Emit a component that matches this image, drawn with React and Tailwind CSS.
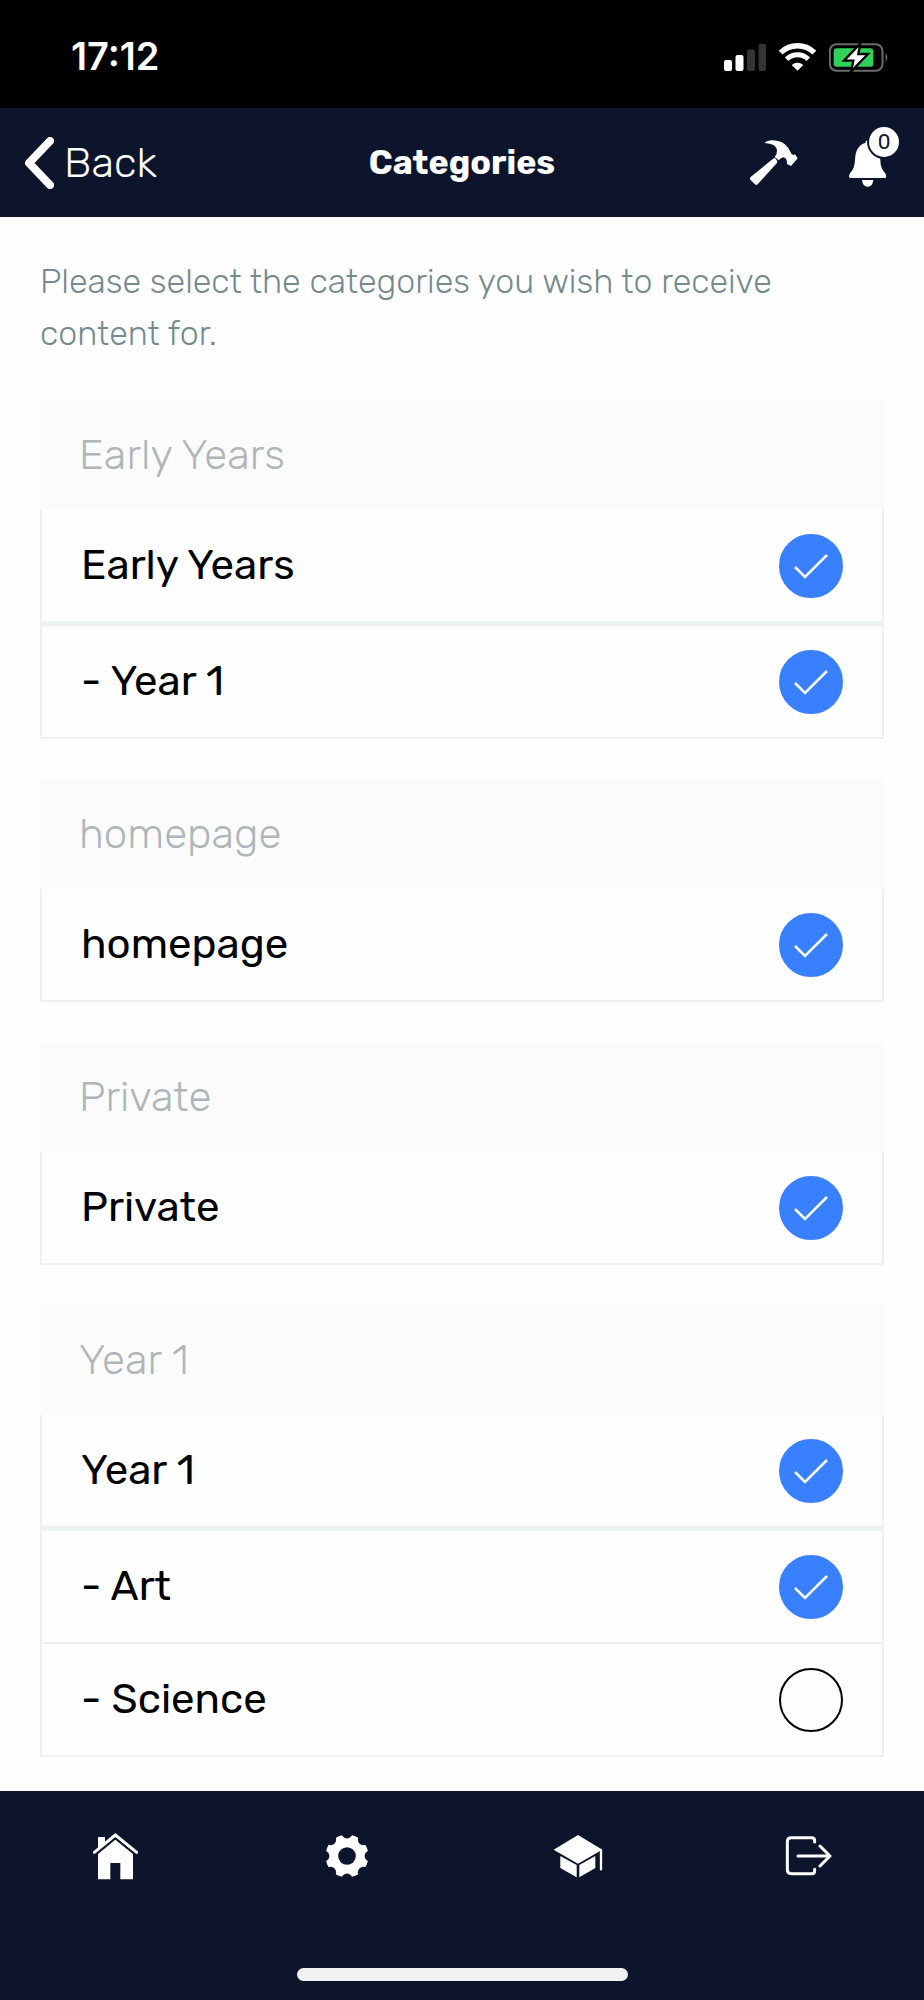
import React, { useState } from "react";

const initialGroups = [
  {
    title: "Early Years",
    items: [
      { label: "Early Years", checked: true },
      { label: "- Year 1", checked: true },
    ],
  },
  {
    title: "homepage",
    items: [{ label: "homepage", checked: true }],
  },
  {
    title: "Private",
    items: [{ label: "Private", checked: true }],
  },
  {
    title: "Year 1",
    items: [
      { label: "Year 1", checked: true },
      { label: "- Art", checked: true },
      { label: "- Science", checked: false },
    ],
  },
];

const StatusBar = () => (
  <div className="h-[108px] bg-black text-white flex items-center justify-between pl-[71px] pr-[35px]">
    <span className="font-['Inter',sans-serif] font-semibold text-[38px] leading-10 pt-1">
      17:12
    </span>
    <div className="flex items-center gap-[13px] pt-1.5">
      {/* Signal */}
      <svg width="42" height="27" viewBox="0 0 42 27" fill="white">
        <rect x="0" y="16" width="8" height="11" rx="2" />
        <rect x="11.5" y="11" width="8" height="16" rx="2" />
        <rect x="23" y="5.500" width="8" height="21.500" rx="2" fill="#343434" />
        <rect x="34.500" y="0" width="7.500" height="27" rx="2" fill="#343434" />
      </svg>
      {/* Wifi */}
      <svg width="37" height="28" viewBox="0 0 111 84" fill="none" stroke="white">
        <path d="M5 29 A72 72 0 0 1 106 29" strokeWidth="16" />
        <path d="M23 49 A46 46 0 0 1 88 49" strokeWidth="15" />
        <path d="M55.500 83 L38 66 Q55.500 52 73 66 Z" fill="white" stroke="none" />
      </svg>
      {/* Battery */}
      <svg width="60" height="29" viewBox="0 0 180 87">
        <rect x="2.500" y="4" width="158" height="79" rx="20" fill="none" stroke="#6b6b6b" strokeWidth="6" />
        <path d="M170 30 Q180 43 170 57 Z" fill="#6b6b6b" />
        <rect x="14" y="16" width="119" height="55" rx="9" fill="#30d158" />
        <path
          d="M94 1 L45 53 H73 L66 86 L117 33 H88 Z"
          fill="white"
          stroke="black"
          strokeWidth="7"
        />
      </svg>
    </div>
  </div>
);

const HammerIcon = () => (
  <svg width="50" height="47" viewBox="862 416 150 141" fill="white">
    <path d="M936 474 Q939 472 942 475 L946 481 Q948 485 945 489 L888 552 Q884 556 880 552 L866 538 Q863 534 867 530 Z" />
    <path d="M909 428 Q917 419 934 420 Q957 421 971 433 Q982 442 987 456 Q989 465 996 464 L1000 462 L1008 474 L988 497 L976 491 Q977 474 966 471 Q957 472 951 480 L939 470 Q947 461 946 450 Q943 432 923 430 Z" />
  </svg>
);

const BellIcon = () => (
  <svg width="38" height="48" viewBox="1161 414 114 144" fill="white">
    <path d="M1216 418 Q1222 418 1222 426 Q1253 434 1255 478 Q1255 503 1270 517 Q1276 531 1268 531 H1167 Q1157 531 1164 517 Q1178 503 1179 478 Q1180 434 1210 426 Q1210 418 1216 418 Z" />
    <path d="M1200 537 H1234 Q1232 557 1217 557 Q1202 557 1200 537 Z" />
  </svg>
);

const Header = () => (
  <header className="h-[109px] bg-[#0d152d] text-white grid grid-cols-[1fr_auto_1fr] items-center px-6">
    <button type="button" className="flex items-center gap-2.5 justify-self-start">
      <svg width="30" height="52" viewBox="0 0 30 52" fill="none" stroke="white" strokeWidth="8" strokeLinecap="round" strokeLinejoin="round">
        <path d="M26 4 L5 26 L26 48" />
      </svg>
      <span className="font-light text-[42px] leading-[52px]">Back</span>
    </button>
    <h1 className="font-bold text-[34px] leading-[52px]">Categories</h1>
    <div className="flex items-center gap-[50px] justify-self-end pr-[13px]">
      <button type="button" aria-label="Tools">
        <HammerIcon />
      </button>
      <button type="button" aria-label="Notifications" className="relative">
        <BellIcon />
        <span className="absolute -top-3 -right-3 size-[30px] rounded-full bg-white ring-2 ring-[#0d152d] text-[#0d152d] text-xl leading-[30px] text-center">
          0
        </span>
      </button>
    </div>
  </header>
);

const CategoryRow = ({ item, divider, onToggle }) => (
  <label className={`flex items-center justify-between px-[39px] border-[#ecf1f4] ${divider}`}>
    <span className="text-[42px] leading-[111px]">{item.label}</span>
    <span className="grid place-items-center *:col-start-1 *:row-start-1">
      <input
        type="checkbox"
        checked={item.checked}
        onChange={onToggle}
        className="appearance-none size-16 rounded-full border-2 border-black checked:border-[#3880ff] checked:bg-[#3880ff]"
      />
      {item.checked && (
        <svg width="34" height="26" viewBox="0 0 34 26" fill="none" stroke="white" strokeWidth="2.5" className="pointer-events-none">
          <path d="M1 14 L11 24 L33 2" />
        </svg>
      )}
    </span>
  </label>
);

const CategoryGroup = ({ group, onToggle }) => {
  // The parent category is set apart from its children by a thicker line
  const getDivider = (index) => {
    if (index === group.items.length - 1) return "border-b-2";
    return index === 0 ? "border-b-5" : "border-b-2";
  };

  return (
    <section>
      <h2 className="bg-[#fbfbfb] px-[39px] font-light text-[42px] leading-[110px] text-[#adb6b9]">
        {group.title}
      </h2>
      <div className="border-x-2 border-[#ecf1f4]">
        {group.items.map((item, index) => (
          <CategoryRow
            key={item.label}
            item={item}
            divider={getDivider(index)}
            onToggle={() => onToggle(index)}
          />
        ))}
      </div>
    </section>
  );
};

const HomeIcon = () => (
  <svg width="45" height="47" viewBox="282 157 135 141" fill="white">
    <path d="M297 169 H318 V186 L297 204 Z" />
    <path d="M286 215 L349 163 L413 215" fill="none" stroke="white" strokeWidth="9" strokeLinecap="round" />
    <path d="M349 177 L402 220 V296 H364 V247 H334 V296 H297 V220 Z" />
  </svg>
);

const notchAngles = [0, 45, 90, 135, 180, 225, 270, 315];

const GearIcon = () => (
  <svg width="44" height="44" viewBox="-22 -22 44 44">
    <mask id="gear">
      <circle r="21.500" fill="white" />
      <circle r="8.800" fill="black" />
      {notchAngles.map((angle) => (
        <circle key={angle} cy="-23" r="5.400" fill="black" transform={`rotate(${angle})`} />
      ))}
    </mask>
    <rect x="-22" y="-22" width="44" height="44" fill="white" mask="url(#gear)" />
  </svg>
);

const CapIcon = () => (
  <svg width="50" height="44" viewBox="271 161 150 132" fill="white">
    <path d="M273 208 L346 164 L419 208 L346 250 Z" />
    <path d="M293 227 L342 254 V291 L293 263 Z" />
    <path d="M350 254 L398 227 V263 L350 291 Z" />
    <path d="M415 209 V267" stroke="white" strokeWidth="7" strokeLinecap="round" />
  </svg>
);

const LogoutIcon = () => (
  <svg width="47" height="40" viewBox="969 168 141 120" fill="none" stroke="white" strokeWidth="9" strokeLinecap="round" strokeLinejoin="round">
    <path d="M1058 186 V182 Q1058 173 1049 173 H988 Q976 173 976 184 V270 Q976 281 988 281 H1049 Q1058 281 1058 272 V268" />
    <path d="M1008 228 H1103 M1074 198 L1104 228 L1074 258" />
  </svg>
);

const tabs = [
  { name: "Home", Icon: HomeIcon },
  { name: "Settings", Icon: GearIcon },
  { name: "Learning", Icon: CapIcon },
  { name: "Log out", Icon: LogoutIcon },
];

const TabBar = () => (
  <footer className="h-[209px] bg-[#0d152d] flex flex-col items-center justify-between pb-[19px]">
    <nav className="w-full grid grid-cols-4">
      {tabs.map(({ name, Icon }) => (
        <button key={name} type="button" aria-label={name} className="h-[130px] flex items-center justify-center">
          <Icon />
        </button>
      ))}
    </nav>
    <div className="w-[331px] h-[13px] rounded-full bg-[#f2f2f2]" />
  </footer>
);

const App = () => {
  const [groups, setGroups] = useState(initialGroups);

  const toggleItem = (groupIndex, itemIndex) => {
    setGroups((prev) =>
      prev.map((group, g) =>
        g !== groupIndex
          ? group
          : {
              ...group,
              items: group.items.map((item, i) =>
                i === itemIndex ? { ...item, checked: !item.checked } : item
              ),
            }
      )
    );
  };

  return (
    <div className="min-h-screen flex flex-col bg-[#fefefe] text-black font-['Rubik','Roboto',sans-serif]">
      <StatusBar />
      <Header />
      <main className="flex-1 px-10 pt-[39px] pb-[30px]">
        <p className="font-light text-[34px] leading-[52px] text-[#738a8f] mb-10">
          Please select the categories you wish to receive content for.
        </p>
        <div className="flex flex-col gap-10">
          {groups.map((group, index) => (
            <CategoryGroup
              key={group.title}
              group={group}
              onToggle={(itemIndex) => toggleItem(index, itemIndex)}
            />
          ))}
        </div>
      </main>
      <TabBar />
    </div>
  );
};

export default App;
